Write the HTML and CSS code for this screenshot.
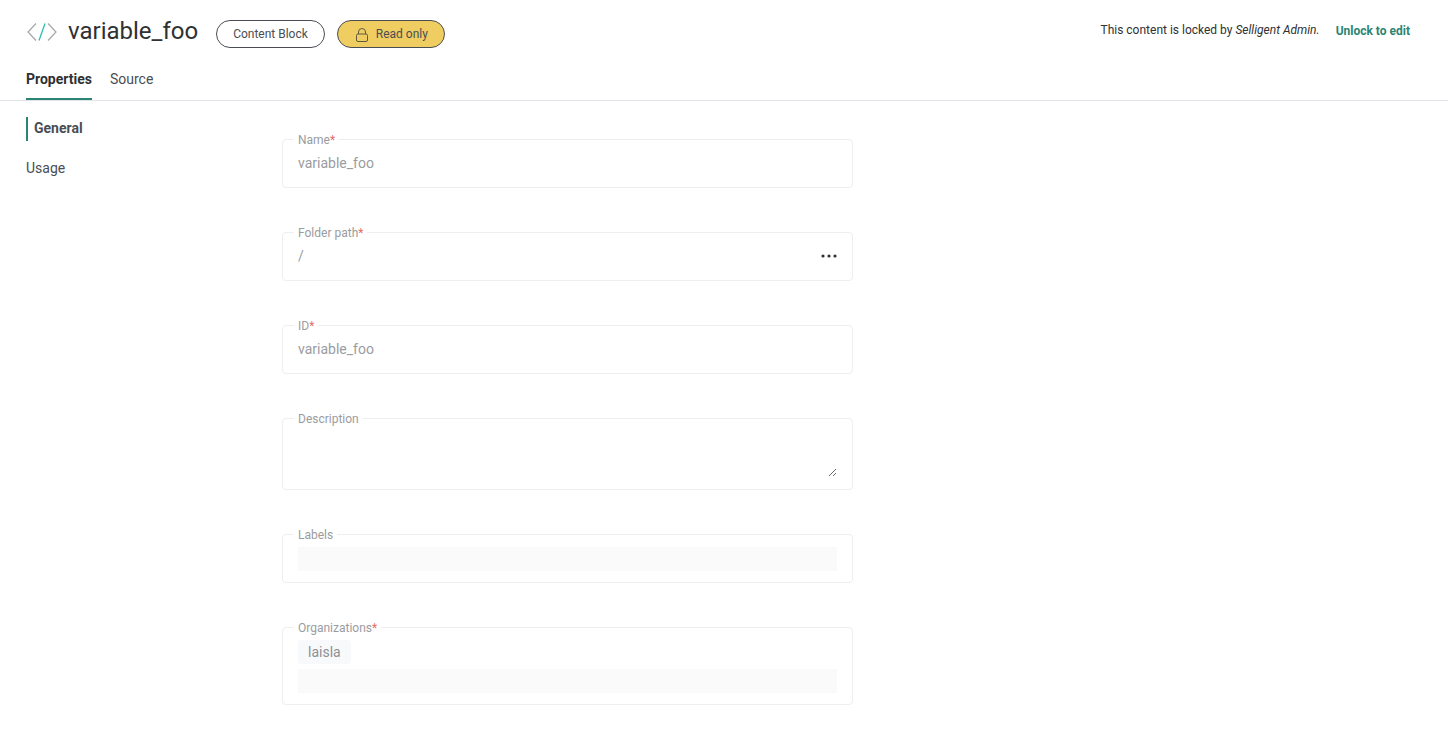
FILE: index.html
```html
<!DOCTYPE html>
<html lang="en">
<head>
  <meta charset="utf-8">
  <meta name="viewport" content="width=device-width, initial-scale=1">
  <title>variable_foo</title>
  <link rel="stylesheet" href="styles.css">
</head>
<body>
  <header class="header">
    <div class="title-bar">
      <svg class="code-icon" width="30" height="20" viewBox="0 0 30 20" fill="none" aria-hidden="true">
        <path d="M9 1.5L1 10l8 8.5M21 1.5L29 10l-8 8.5" stroke="#a3a6a9" stroke-width="1.2"/>
        <path d="M18 1.5L12 18.5" stroke="#2bbfae" stroke-width="1.3"/>
      </svg>
      <h1 class="title">variable_foo</h1>
      <span class="pill">Content Block</span>
      <span class="pill pill-locked">
        <svg width="12" height="14" viewBox="0 0 12 14" fill="none" stroke="#5f5a3c" aria-hidden="true">
          <rect x="0.5" y="6" width="11" height="7.5" rx="1.5"/>
          <path d="M2.5 6V4a3.5 3.5 0 0 1 7 0v2"/>
        </svg>
        Read only
      </span>
      <p class="lock-info">This content is locked by <em>Selligent Admin.</em></p>
      <a class="unlock" href="#">Unlock to edit</a>
    </div>
    <nav class="tabs">
      <a class="tab active" href="#">Properties</a>
      <a class="tab" href="#">Source</a>
    </nav>
  </header>

  <div class="content">
    <nav class="sidebar">
      <a class="side-link active" href="#">General</a>
      <a class="side-link" href="#">Usage</a>
    </nav>

    <form class="form">
      <div class="field">
        <label for="name">Name<span class="required">*</span></label>
        <input type="text" id="name" value="variable_foo" readonly>
      </div>
      <div class="field">
        <label for="folder">Folder path<span class="required">*</span></label>
        <input type="text" id="folder" value="/" readonly>
        <button type="button" class="browse" aria-label="Browse folders">
          <svg width="16" height="4" viewBox="0 0 16 4" fill="#2f3133" aria-hidden="true">
            <circle cx="2" cy="2" r="1.6"/>
            <circle cx="8" cy="2" r="1.6"/>
            <circle cx="14" cy="2" r="1.6"/>
          </svg>
        </button>
      </div>
      <div class="field">
        <label for="id">ID<span class="required">*</span></label>
        <input type="text" id="id" value="variable_foo" readonly>
      </div>
      <div class="field">
        <label for="description">Description</label>
        <textarea id="description" readonly></textarea>
      </div>
      <div class="field field-tags">
        <label for="labels">Labels</label>
        <input type="text" id="labels" readonly>
      </div>
      <div class="field field-tags">
        <label for="organizations">Organizations<span class="required">*</span></label>
        <span class="tag">laisla</span>
        <input type="text" id="organizations" readonly>
      </div>
    </form>
  </div>
</body>
</html>
```

FILE: styles.css
```css
* {
  box-sizing: border-box;
}

body {
  margin: 0;
  background: #fff;
  color: #4a4e54;
  font-family: Roboto, "Liberation Sans", sans-serif;
  font-size: 14px;
  line-height: 20px;
}

a {
  color: inherit;
  text-decoration: none;
}

.header {
  padding: 16px 38px 0 26px;
  border-bottom: 1px solid #e1e4e8;
}

.title-bar {
  display: flex;
  align-items: center;
  height: 32px;
}

.code-icon {
  margin-left: 1px;
}

.title {
  margin: 0 18px 2px 11px;
  color: #2f3133;
  font-size: 24px;
  font-weight: 400;
  line-height: 30px;
}

.pill {
  display: flex;
  align-items: center;
  height: 28px;
  margin: 4px 12px 0 0;
  padding: 0 16px;
  border: 1px solid #4a4e54;
  border-radius: 14px;
  font-size: 12px;
}

.pill-locked {
  gap: 8px;
  padding: 0 16px 0 18px;
  background: #f0cd60;
}

.pill-locked svg {
  margin-top: 2px;
}

.lock-info {
  margin: 0 0 4px auto;
  color: #2f3133;
  font-size: 12px;
}

.unlock {
  margin: 0 0 2px 16px;
  color: #2b8574;
  font-size: 12px;
  font-weight: 700;
}

.tabs {
  display: flex;
  gap: 18px;
  margin-top: 20px;
}

.tab {
  height: 32px;
  padding-top: 1px;
}

.tab.active {
  border-bottom: 2px solid #2b8574;
  color: #2f3133;
  font-weight: 700;
}

.content {
  display: grid;
  grid-template-columns: 256px 1fr;
  padding: 16px 24px 27px 26px;
}

.sidebar {
  display: flex;
  flex-direction: column;
  gap: 16px;
}

.side-link {
  padding-bottom: 2px;
  line-height: 22px;
}

.side-link.active {
  padding-left: 6px;
  border-left: 2px solid #2b8574;
  font-weight: 700;
}

.form {
  display: flex;
  flex-direction: column;
  gap: 44px;
  width: 50%;
  padding-top: 22px;
}

.field {
  position: relative;
  display: flex;
  align-items: center;
  padding: 11px 15px 12px;
  border: 1px solid #eeeeef;
  border-radius: 4px;
}

/* label sits on the top border */
.field label {
  position: absolute;
  top: -8px;
  left: 11px;
  padding: 0 4px;
  background: #fff;
  color: #9a9c9f;
  font-size: 12px;
  line-height: 16px;
}

.required {
  color: #ea6b66;
}

.field input,
.field textarea {
  flex: 1;
  min-width: 0;
  height: 24px;
  padding: 0;
  border: 0;
  outline: 0;
  background: transparent;
  color: #9a9c9f;
  font: inherit;
}

.field textarea {
  height: 47px;
  resize: vertical;
}

.field-tags {
  flex-direction: column;
  align-items: stretch;
  gap: 5px;
  padding: 12px 15px 11px;
}

.field-tags input {
  flex: none;
  background: #fafafa;
}

.tag {
  align-self: flex-start;
  padding: 0 10px;
  border-radius: 4px;
  background: #f8f9fa;
  color: #8e9093;
  line-height: 24px;
}

.browse {
  display: flex;
  padding: 0;
  border: 0;
  background: none;
}
```
